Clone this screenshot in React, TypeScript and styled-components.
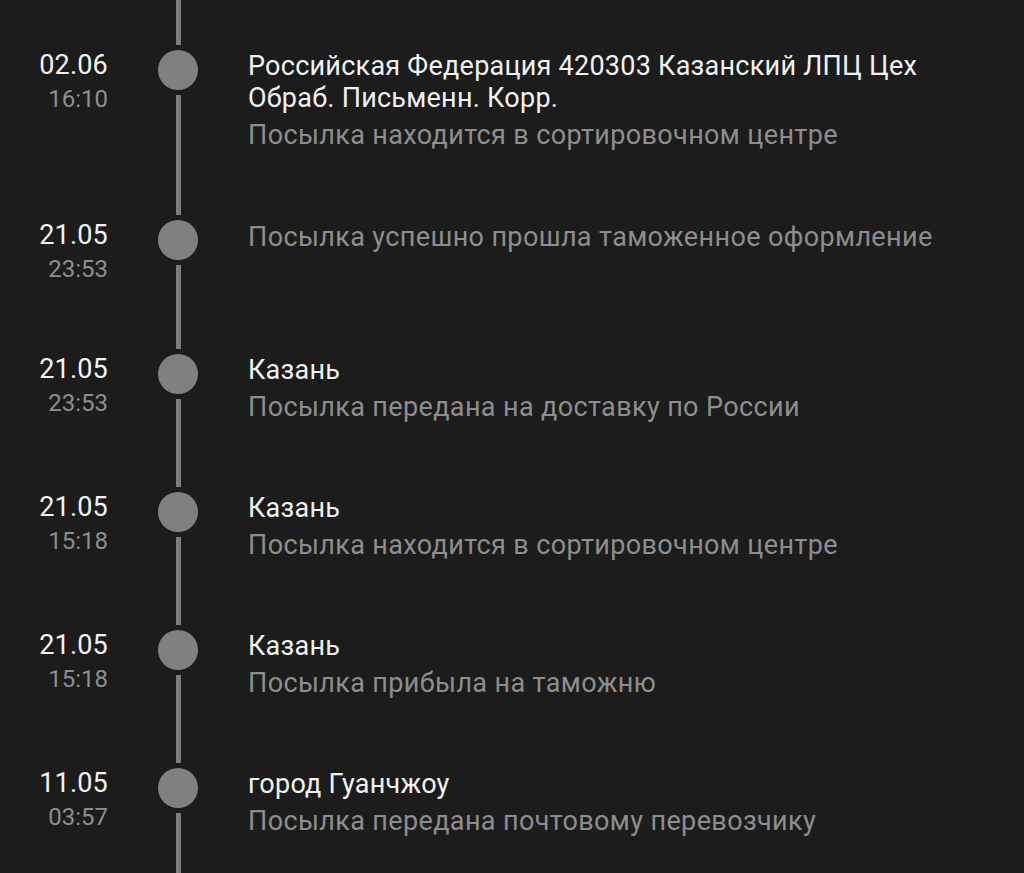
import React from "react";
import styled, { createGlobalStyle } from "styled-components";

const Global = createGlobalStyle`
  html, body {
    margin: 0;
    padding: 0;
    background: #1c1c1c;
    height: 873px;
    overflow: hidden;
  }
  body {
    font-family: Roboto, "Noto Sans", sans-serif;
    -webkit-font-smoothing: antialiased;
  }
`;

const Page = styled.div`
  width: 1024px;
  height: 873px;
  overflow: hidden;
  background: #1c1c1c;
`;

const Row = styled.div`
  display: grid;
  grid-template-columns: 108px 48px 1fr;
  column-gap: 46px;
`;

const DateCol = styled.div`
  display: flex;
  flex-direction: column;
  align-items: flex-end;
  padding-top: 1px;
  padding-bottom: 65px;
`;

const DateText = styled.div`
  color: #f2f2f2;
  font-size: 27px;
  line-height: 34px;
  letter-spacing: 0.2px;
`;

const TimeText = styled.div`
  color: #8e8e8e;
  font-size: 24px;
  line-height: 34px;
`;

const Marker = styled.div`
  display: flex;
  flex-direction: column;
  align-items: center;
`;

const Dot = styled.div`
  flex: none;
  width: 40px;
  height: 40px;
  border-radius: 50%;
  background: #808080;
  margin-top: 3px;
`;

const Segment = styled.div<{ $h?: number }>`
  width: 5px;
  background: #7c7c7c;
  flex: ${(p) => (p.$h ? "none" : "1")};
  height: ${(p) => (p.$h ? `${p.$h}px` : "auto")};
  margin-top: ${(p) => (p.$h ? "0" : "5px")};
  margin-bottom: 2px;
`;

const Body = styled.div`
  display: flex;
  flex-direction: column;
  padding-top: 3px;
  padding-bottom: 65px;
`;

const Title = styled.div`
  color: #f2f2f2;
  font-size: 27px;
  line-height: 32px;
  letter-spacing: 0.25px;
  max-width: 700px;
`;

const Sub = styled.div`
  color: #8e8e8e;
  font-size: 27px;
  line-height: 34px;
  letter-spacing: 0.37px;

  ${Title} + & {
    margin-top: 4px;
  }
`;

type Ev = { d: string; t: string; title?: string; sub: string };

const events: Ev[] = [
  {
    d: "02.06",
    t: "16:10",
    title: "Российская Федерация 420303 Казанский ЛПЦ Цех Обраб. Письменн. Корр.",
    sub: "Посылка находится в сортировочном центре",
  },
  { d: "21.05", t: "23:53", sub: "Посылка успешно прошла таможенное оформление" },
  { d: "21.05", t: "23:53", title: "Казань", sub: "Посылка передана на доставку по России" },
  { d: "21.05", t: "15:18", title: "Казань", sub: "Посылка находится в сортировочном центре" },
  { d: "21.05", t: "15:18", title: "Казань", sub: "Посылка прибыла на таможню" },
  { d: "11.05", t: "03:57", title: "город Гуанчжоу", sub: "Посылка передана почтовому перевозчику" },
];

export default function App() {
  return (
    <Page>
      <Global />
      <Row>
        <div />
        <Marker>
          <Segment $h={45} />
        </Marker>
        <div />
      </Row>
      {events.map((e, i) => (
        <Row key={i}>
          <DateCol>
            <DateText>{e.d}</DateText>
            <TimeText>{e.t}</TimeText>
          </DateCol>
          <Marker>
            <Dot />
            <Segment />
          </Marker>
          <Body>
            {e.title && <Title>{e.title}</Title>}
            <Sub>{e.sub}</Sub>
          </Body>
        </Row>
      ))}
    </Page>
  );
}
